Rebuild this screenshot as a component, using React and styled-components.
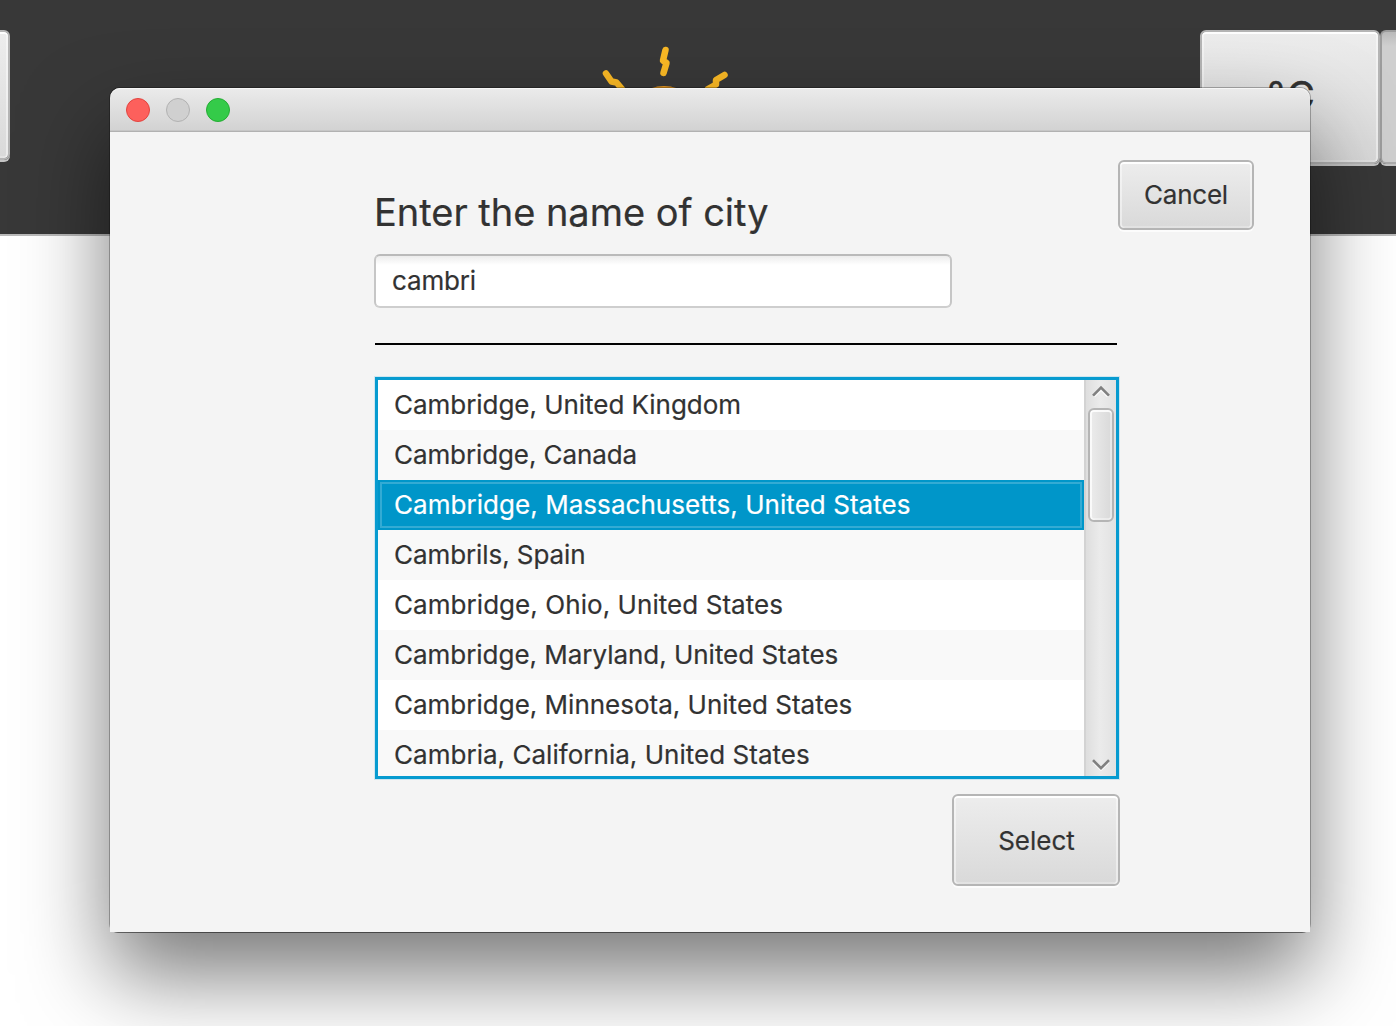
import React from 'react';
import styled, { createGlobalStyle, css } from 'styled-components';

const GlobalStyle = createGlobalStyle`
  *, *::before, *::after { box-sizing: border-box; }
  body {
    margin: 0;
    overflow: hidden;
    background: #fff;
    color: #323232;
    font-family: Inter, "Liberation Sans", sans-serif;
    font-size: 26px;
    -webkit-text-stroke: 0.2px;
  }
`;

const Desktop = styled.div`
  position: relative;
  width: 1396px;
  height: 1026px;
  overflow: hidden;
  background: #fff;
`;

const WeatherHeader = styled.header`
  display: grid;
  grid-template-columns: 10px 1fr 196px;
  height: 236px;
  padding-top: 30px;
  background: #383838;
  border-bottom: 2px solid #bababa;
`;

const SunIcon = styled.svg`
  justify-self: start;
  margin: 10px 0 0 574px;
`;

const UnitSwitch = styled.div`
  display: flex;
`;

const buttonSkin = css`
  border: 2px solid #b5b5b5;
  border-radius: 6px;
  background: linear-gradient(#ededed, #d9d9d9) padding-box;
  box-shadow: inset 0 2px 0 #fff, inset 2px 0 0 rgba(255, 255, 255, 0.45),
    inset -2px 0 0 rgba(255, 255, 255, 0.45), inset 0 -2px 0 rgba(255, 255, 255, 0.25),
    0 2px 0 ${(p) => p.$edge || '#fcfcfc'};
`;

const EdgeButton = styled.div`
  ${buttonSkin}
  width: 80px;
  height: 130px;
  margin-left: -70px;
`;

const UnitButton = styled.button`
  ${buttonSkin}
  flex: none;
  width: 180px;
  height: 134px;
  padding: 0 0 4px 5px;
  font: 38px Inter, sans-serif;
  letter-spacing: 3px;
  color: #323232;
  -webkit-text-stroke: 0.6px;
  ${(p) =>
    p.$pressed &&
    css`
      width: 80px;
      border-color: #9c9c9c #acacac #acacac #9c9c9c;
      background: linear-gradient(#b9b9b9, #cfcfcf 14px, #cfcfcf);
      box-shadow: 0 2px 0 #c4c4c4;
    `}
`;

const Dialog = styled.section`
  position: absolute;
  left: 110px;
  top: 88px;
  display: flex;
  flex-direction: column;
  width: 1200px;
  height: 844px;
  border-radius: 10px 10px 8px 8px;
  box-shadow: 0 1px 0 rgba(0, 0, 0, 0.3), 0 0 0 1px rgba(0, 0, 0, 0.27),
    0 43px 86px rgba(0, 0, 0, 0.53);
`;

const TitleBar = styled.div`
  display: flex;
  align-items: center;
  gap: 16px;
  height: 44px;
  padding: 0 16px;
  border-bottom: 1px solid #b1b1b1;
  border-radius: 10px 10px 0 0;
  background: linear-gradient(#ebebeb, #d2d2d2);
  box-shadow: inset 0 1px 0 #f6f6f6, inset 0 -1px 0 #c6c6c6;
`;

const Light = styled.span`
  width: 24px;
  height: 24px;
  margin-top: 1px;
  border: 1px solid ${(p) => p.$rim};
  border-radius: 50%;
  background: ${(p) => p.$fill};
`;

const DialogBody = styled.div`
  flex: 1;
  display: grid;
  grid-template-columns: 264px 743px 137px;
  background: #f4f4f4;
`;

const Form = styled.div`
  grid-column: 2;
  display: flex;
  flex-direction: column;
  align-items: flex-start;
  padding-top: 56px;
`;

const Heading = styled.h1`
  margin: 0 0 18px;
  font-size: 38px;
  font-weight: 400;
  line-height: 48px;
  letter-spacing: -0.03px;
  white-space: nowrap;
`;

const CityInput = styled.input`
  width: 578px;
  height: 54px;
  padding: 0 16px 1px;
  border: 2px solid;
  border-color: #bababa #c6c6c6 #cecece;
  border-radius: 6px;
  outline: none;
  background: linear-gradient(#ececec, #fff 9px) padding-box;
  color: #323232;
  font: 26px Inter, sans-serif;
  letter-spacing: -0.15px;
`;

const Divider = styled.hr`
  width: 742px;
  height: 2px;
  margin: 35px 0 32px 1px;
  border: 0;
  background: #000;
`;

const ListBox = styled.div`
  display: grid;
  grid-template-columns: 1fr 32px;
  width: 744px;
  height: 402px;
  margin-left: 1px;
  border: 3px solid #079bd0;
  box-shadow: 0 0 0 1px #cfe6f0;
  overflow: hidden;
`;

const Rows = styled.ul`
  min-height: 0;
  margin: 0;
  padding: 0;
  overflow: hidden;
  list-style: none;
`;

const Row = styled.li`
  height: 50px;
  padding-left: 16px;
  line-height: 50px;
  white-space: nowrap;
  letter-spacing: ${(p) => p.$track}px;
  background: ${(p) => (p.$odd ? '#f9f9f9' : '#fff')};
  ${(p) =>
    p.$selected &&
    css`
      background: #0096c9;
      color: #fff;
      box-shadow: inset 0 0 0 2px #0096c9, inset 0 0 0 4px #33abd4;
    `}
`;

const ScrollBar = styled.div`
  display: flex;
  flex-direction: column;
  align-items: center;
  padding: 5px 0 5px 2px;
  background: linear-gradient(90deg, #d3d3d3 2px, #dedede 2px, #ebebeb 16px, #e2e2e2);
`;

const Thumb = styled.div`
  width: 26px;
  height: 114px;
  margin: 11px 0 auto;
  border: 2px solid #b5b5b5;
  border-radius: 6px;
  background: linear-gradient(90deg, #ececec, #d9d9d9) padding-box;
  box-shadow: inset 0 2px 0 rgba(255, 255, 255, 0.85), inset 2px 0 0 #fafafa,
    inset -2px 0 0 rgba(255, 255, 255, 0.4), inset 0 -2px 0 rgba(255, 255, 255, 0.4);
`;

const Arrow = ({ down }) => (
  <svg width="18" height="12" viewBox="0 0 18 12" fill="none">
    <path d={down ? 'M1.5 3.5 9 11l7.500-7.500' : 'M1.500 12.500 9 5l7.500 7.500'} stroke="#fff" strokeWidth="2" opacity=".7" />
    <path d={down ? 'M1 1.200 9 9.200l8-8' : 'M1 10.600 9 2.600l8 8'} stroke="#808080" strokeWidth="2.600" />
  </svg>
);

const PushButton = styled.button`
  ${buttonSkin}
  width: ${(p) => (p.$large ? 168 : 136)}px;
  height: ${(p) => (p.$large ? 92 : 70)}px;
  padding: ${(p) => (p.$large ? '0 0 0 1px' : '0 0 2px')};
  color: #323232;
  font: 26px Inter, sans-serif;
  letter-spacing: ${(p) => (p.$large ? 0 : -0.25)}px;
`;

const SelectButton = styled(PushButton)`
  align-self: flex-end;
  margin: 15px -3px 0 0;
`;

const CancelButton = styled(PushButton)`
  grid-column: 3;
  margin: 28px 0 0 1px;
`;

const cities = [
  ['Cambridge, United Kingdom', -0.04],
  ['Cambridge, Canada', -0.1],
  ['Cambridge, Massachusetts, United States', 0.05],
  ['Cambrils, Spain', -0.08],
  ['Cambridge, Ohio, United States', 0.06],
  ['Cambridge, Maryland, United States', -0.03],
  ['Cambridge, Minnesota, United States', 0],
  ['Cambria, California, United States', 0.03],
];

export default function App() {
  return (
    <Desktop>
      <GlobalStyle />
      <WeatherHeader>
        <EdgeButton $edge="#c4c4c4" />
        <SunIcon width="160" height="90" viewBox="584 40 160 90" fill="none">
          <ellipse cx="664" cy="117" rx="34" ry="31" fill="#e8981f" />
          <g stroke="#fab925" strokeWidth="6.500" strokeLinecap="round" strokeLinejoin="round">
            <path d="M665.500 50 663 60.500l3.500 2.500L663.500 73" />
            <path d="M606 73.500 611.500 81.500l5 1L622 89" />
            <path d="M724.500 75 716 80v4.500L708 89" />
          </g>
        </SunIcon>
        <UnitSwitch>
          <UnitButton $edge="#c4c4c4">°C</UnitButton>
          <UnitButton $pressed />
        </UnitSwitch>
      </WeatherHeader>

      <Dialog>
        <TitleBar>
          <Light $fill="#fd605c" $rim="#e2443f" />
          <Light $fill="#d0d0d0" $rim="#b2b2b2" />
          <Light $fill="#34cb49" $rim="#24ad33" />
        </TitleBar>
        <DialogBody>
          <Form>
            <Heading>Enter the name of city</Heading>
            <CityInput defaultValue="cambri" />
            <Divider />
            <ListBox>
              <Rows>
                {cities.map(([name, track], i) => (
                  <Row key={name} $odd={i % 2 === 1} $selected={i === 2} $track={track}>
                    {name}
                  </Row>
                ))}
              </Rows>
              <ScrollBar>
                <Arrow />
                <Thumb />
                <Arrow down />
              </ScrollBar>
            </ListBox>
            <SelectButton $large>Select</SelectButton>
          </Form>
          <CancelButton>Cancel</CancelButton>
        </DialogBody>
      </Dialog>
    </Desktop>
  );
}
